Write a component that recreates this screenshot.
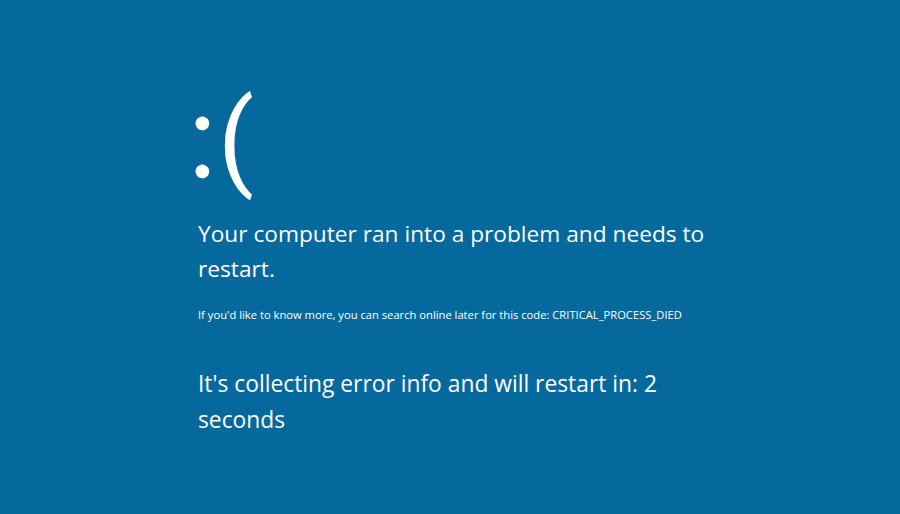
export default function App() {
  return (
    <div className="h-[514px] w-full overflow-hidden bg-[#06699d] text-white font-['Open_Sans',sans-serif]">
      <div className="pl-[198px] pt-[68px]">
        <div className="-ml-[10px] h-[145px] text-[105px] leading-[145px] font-['Roboto',sans-serif] whitespace-nowrap">
          <span className="inline-block w-[30px] text-[120px] leading-none font-light font-['Lato',sans-serif] [-webkit-text-stroke:2.5px_white]">
            :
          </span>
          <span>(</span>
        </div>
        <p className="mt-[3px] w-[540px] text-[22.7px] leading-[35px]">
          Your computer ran into a problem and needs to restart.
        </p>
        <p className="mt-[22px] text-[11.2px] leading-[14px]">
          If you'd like to know more, you can search online later for this code: CRITICAL_PROCESS_DIED
        </p>
        <p className="mt-[44px] w-[520px] text-[22.8px] leading-[36px]">
          It's collecting error info and will restart in: 2 seconds
        </p>
      </div>
    </div>
  );
}
